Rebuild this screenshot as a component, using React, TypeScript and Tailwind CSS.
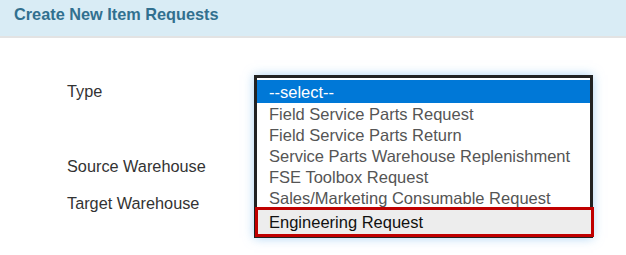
import React from "react";

const options = [
  "Field Service Parts Request",
  "Field Service Parts Return",
  "Service Parts Warehouse Replenishment",
  "FSE Toolbox Request",
  "Sales/Marketing Consumable Request",
];

export default function App() {
  return (
    <div className="w-[626px] h-[255px] bg-white font-['Liberation_Sans',Arial,sans-serif] overflow-hidden">
      {/* Panel heading */}
      <div className="h-[38px] bg-[#d9ecf5] border-b-2 border-[#e3e3e3] px-[14px] pt-[6px]">
        <h3 className="text-[16.3px] font-bold text-[#31708f] leading-none">Create New Item Requests</h3>
      </div>

      {/* Form body */}
      <div className="pl-[67px] pt-[44px] text-[16.3px] leading-[18px] text-[#333]">
        <div className="relative">
          <label>Type</label>

          {/* open dropdown list */}
          <div className="absolute left-[187px] top-[-7px] w-[339px] h-[163px] border-[3px] border-[#222] bg-white pt-[2px] text-[16.5px] shadow-[0_0_10px_rgba(102,175,233,0.55)] z-10">
            <div className="h-[23px] bg-[#0078d7] text-white pl-[12px] flex items-center">--select--</div>
            {options.map((o) => (
              <div key={o} className="h-[21px] pl-[12px] flex items-center text-[#555]">
                {o}
              </div>
            ))}
            <div className="absolute left-[-2px] top-[129px] w-[339px] h-[30px] border-[3px] border-[#c00000] bg-[#ededed] pl-[11px] flex items-center text-[#111]">
              Engineering Request
            </div>
          </div>
        </div>

        <div className="mt-[57px]">
          <label>Source Warehouse</label>
        </div>
        <div className="mt-[19px]">
          <label>Target Warehouse</label>
        </div>
      </div>
    </div>
  );
}
